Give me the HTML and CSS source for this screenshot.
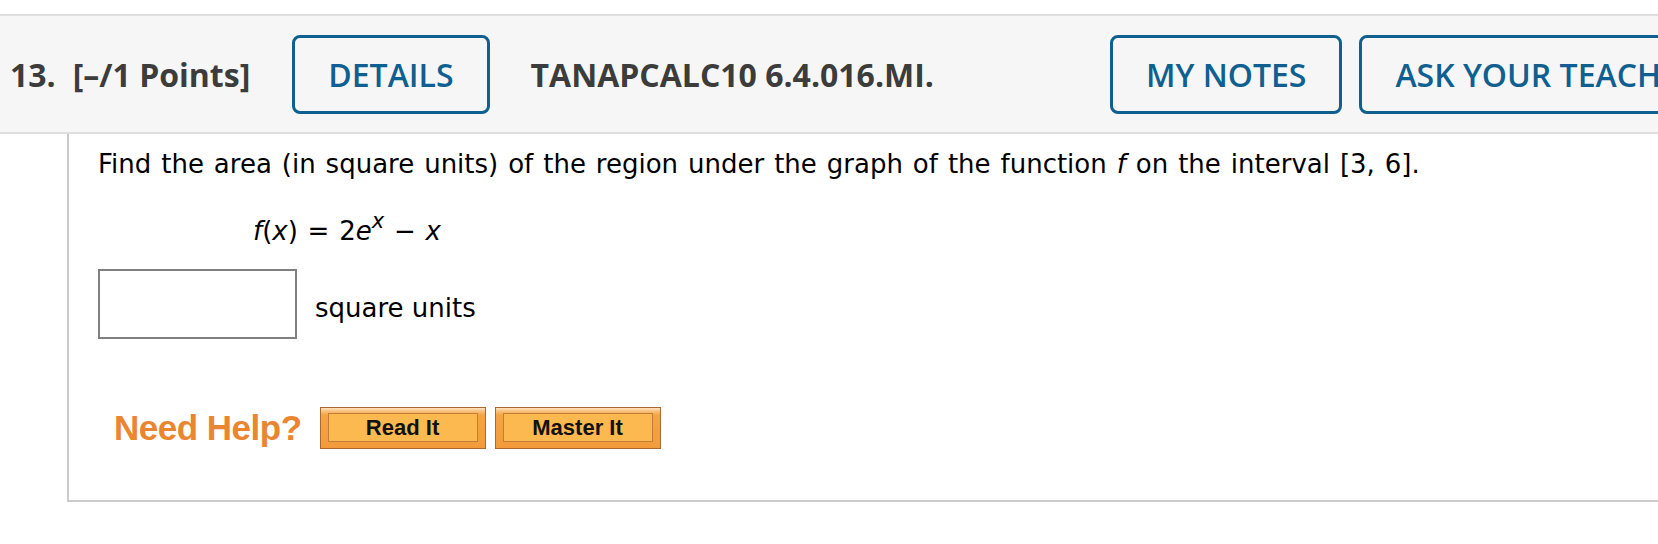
FILE: index.html
```html
<!DOCTYPE html>
<html lang="en">
<head>
<meta charset="utf-8">
<title>Question 13</title>
<link rel="stylesheet" href="styles.css">
</head>
<body>
<div class="page">
  <header class="qhead">
    <span class="qnum">13.</span>
    <span class="qpts">[–/1 Points]</span>
    <button class="hbtn hbtn-details" type="button">DETAILS</button>
    <span class="qid">TANAPCALC10 6.4.016.MI.</span>
    <div class="hright">
      <button class="hbtn" type="button">MY NOTES</button>
      <button class="hbtn" type="button">ASK YOUR TEACHER</button>
    </div>
  </header>
  <section class="qbody">
    <p class="prompt">Find the area (in square units) of the region under the graph of the function <i>f</i> on the interval [3, 6].</p>
    <p class="formula"><i>f</i>(<i>x</i>) = 2<i>e</i><sup><i>x</i></sup> − <i>x</i></p>
    <div class="answer">
      <span class="inputbox"></span>
      <span class="unit">square units</span>
    </div>
    <div class="help">
      <span class="needhelp">Need Help?</span>
      <button class="helpbtn" type="button"><span class="helpbtn-in">Read It</span></button>
      <button class="helpbtn" type="button"><span class="helpbtn-in">Master It</span></button>
    </div>
  </section>
</div>
</body>
</html>
```

FILE: styles.css
```css
html, body {
  margin: 0;
  padding: 0;
  background: #ffffff;
}

.page {
  width: 1658px;
  height: 544px;
  overflow: hidden;
}

.qhead {
  margin-top: 14px;
  height: 116px;
  border-top: 2px solid #dedede;
  border-bottom: 2px solid #dedede;
  background: #f6f6f6;
  display: flex;
  align-items: center;
  padding-left: 10px;
  white-space: nowrap;
  font-family: "Open Sans", "Noto Sans", sans-serif;
  font-size: 32px;
  color: #3c3c3c;
}

.qnum {
  font-weight: 700;
}

.qpts {
  font-weight: 700;
  margin-left: 17px;
}

.qid {
  font-weight: 700;
  margin-left: 41px;
}

.hbtn {
  box-sizing: border-box;
  height: 79px;
  padding: 0 33px;
  border: 3px solid #0f5f91;
  border-radius: 8px;
  background: #f6f6f6;
  color: #0f5f91;
  font-family: "Open Sans", "Noto Sans", sans-serif;
  font-size: 32px;
  font-weight: 600;
  white-space: nowrap;
  flex: none;
}

.hbtn-details {
  margin-left: 42px;
}

.hright {
  display: flex;
  gap: 17px;
  margin-left: 176px;
  flex: none;
}

.qbody {
  margin-left: 67px;
  height: 352px;
  border-left: 2px solid #cbcbcb;
  border-bottom: 2px solid #cbcbcb;
  padding: 14px 0 0 29px;
  font-family: "DejaVu Sans", Verdana, sans-serif;
  font-size: 26px;
  line-height: 32px;
  color: #000000;
}

.prompt {
  margin: 0;
  white-space: nowrap;
  word-spacing: 1.7px;
}

.formula {
  margin: 35px 0 0 155px;
  word-spacing: 1.5px;
}

.formula sup {
  font-size: 21px;
  line-height: 0;
  vertical-align: 12px;
}

.answer {
  margin-top: 22px;
  display: flex;
  align-items: center;
}

.inputbox {
  box-sizing: border-box;
  width: 199px;
  height: 70px;
  border: 2px solid #808080;
  background: #ffffff;
}

.unit {
  margin-left: 18px;
  margin-top: 8px;
}

.help {
  margin-top: 68px;
  display: flex;
  align-items: center;
  gap: 9px;
}

.needhelp {
  margin-left: 16px;
  margin-right: 9px;
  font-family: "Liberation Sans", Arial, sans-serif;
  font-weight: 700;
  font-size: 35px;
  letter-spacing: -0.5px;
  line-height: 42px;
  color: #ea8530;
}

.helpbtn {
  box-sizing: border-box;
  width: 166px;
  height: 42px;
  margin: 0;
  padding: 5px 7px 6px 7px;
  border: 1px solid #a86a2e;
  background: linear-gradient(#fde3c4 0px, #f9c27e 3px, #f5a444 7px, #f39b3a 100%);
  cursor: pointer;
}

.helpbtn-in {
  display: block;
  box-sizing: border-box;
  height: 100%;
  border: 1px solid #c07e3a;
  background: #fbb94f;
  font-family: "Liberation Sans", Arial, sans-serif;
  font-weight: 700;
  font-size: 22px;
  line-height: 25px;
  padding-top: 1px;
  color: #111111;
  text-align: center;
}
```
